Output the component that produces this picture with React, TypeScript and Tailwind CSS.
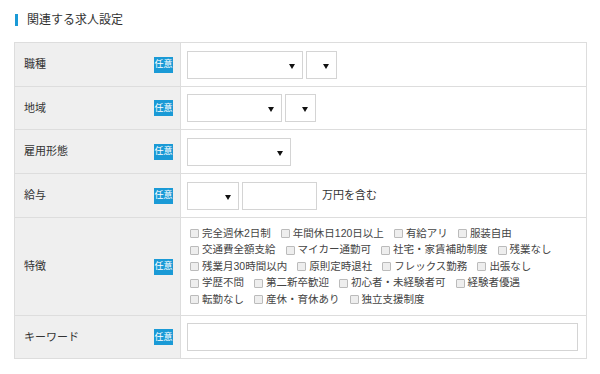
import React from 'react';

const features: string[][] = [
    ['完全週休2日制', '年間休日120日以上', '有給アリ', '服装自由'],
    ['交通費全額支給', 'マイカー通勤可', '社宅・家賃補助制度', '残業なし'],
    ['残業月30時間以内', '原則定時退社', 'フレックス勤務', '出張なし'],
    ['学歴不問', '第二新卒歓迎', '初心者・未経験者可', '経験者優遇'],
    ['転勤なし', '産休・育休あり', '独立支援制度'],
];

const Badge: React.FC = () => (
    <span className="flex h-[16px] w-[19px] items-center justify-center bg-[#1a9ad6] text-[9px] leading-none text-white">
        任意
    </span>
);

const Select: React.FC<{ width: string }> = ({ width }) => (
    <div className={`relative h-[28px] ${width} border border-[#d4d4d4] bg-white`}>
        <span className="absolute right-[7px] top-[12px] h-0 w-0 border-x-[3px] border-t-[5px] border-x-transparent border-t-[#111]" />
    </div>
);

const Row: React.FC<{ label: string; children: React.ReactNode; last?: boolean; tall?: boolean }> = ({
    label,
    children,
    last,
    tall,
}) => (
    <div className={`grid grid-cols-[166px_1fr] ${last ? '' : 'border-b border-[#dddddd]'}`}>
        <div className="flex items-center justify-between border-r border-[#dddddd] bg-[#efefef] pl-[9px] pr-[7px]">
            <span className="text-[11px] text-[#333]">{label}</span>
            <Badge />
        </div>
        <div className={`flex items-center ${tall ? 'pl-[9px]' : 'pl-[6px]'} pr-[8px]`}>{children}</div>
    </div>
);

const App: React.FC = () => {
    return (
        <div
            className="h-[374px] w-[600px] bg-white pt-[14px] text-[#333]"
            style={{ fontFamily: '"Liberation Sans", "Noto Sans CJK JP", sans-serif' }}
        >
            {/* Title */}
            <div className="flex h-[12px] items-center pl-[15px]">
                <span className="h-[12px] w-[3px] bg-[#1a9ad6]" />
                <span className="ml-[9px] text-[12px] text-[#333]">関連する求人設定</span>
            </div>

            {/* Table */}
            <div className="ml-[14px] mt-[16px] w-[573px] border border-[#dddddd]">
                <Row label="職種">
                    <div className="flex h-[43px] items-center gap-[3px]">
                        <Select width="w-[116px]" />
                        <Select width="w-[31px]" />
                    </div>
                </Row>
                <Row label="地域">
                    <div className="flex h-[42px] items-center gap-[3px]">
                        <Select width="w-[95px]" />
                        <Select width="w-[31px]" />
                    </div>
                </Row>
                <Row label="雇用形態">
                    <div className="flex h-[43px] items-center">
                        <Select width="w-[104px]" />
                    </div>
                </Row>
                <Row label="給与">
                    <div className="flex h-[43px] items-center gap-[3px]">
                        <Select width="w-[52px]" />
                        <div className="h-[28px] w-[75px] border border-[#d4d4d4] bg-white" />
                        <span className="ml-[2px] text-[11px] text-[#333]">万円を含む</span>
                    </div>
                </Row>
                <Row label="特徴" tall>
                    <div className="flex h-[97px] flex-col justify-center">
                        {features.map((line, i) => (
                            <div key={i} className="flex h-[16.5px] items-center">
                                {line.map((f) => (
                                    <label key={f} className="mr-[10px] flex items-center text-[10.5px] text-[#444]">
                                        <span className="mr-[3px] h-[9px] w-[9px] rounded-[1px] border border-[#bbbbbb] bg-[#eeeeee]" />
                                        {f}
                                    </label>
                                ))}
                            </div>
                        ))}
                    </div>
                </Row>
                <Row label="キーワード" last>
                    <div className="flex h-[42px] w-full items-center">
                        <div className="h-[28px] w-full border border-[#d4d4d4] bg-white" />
                    </div>
                </Row>
            </div>
        </div>
    );
};

export default App;
